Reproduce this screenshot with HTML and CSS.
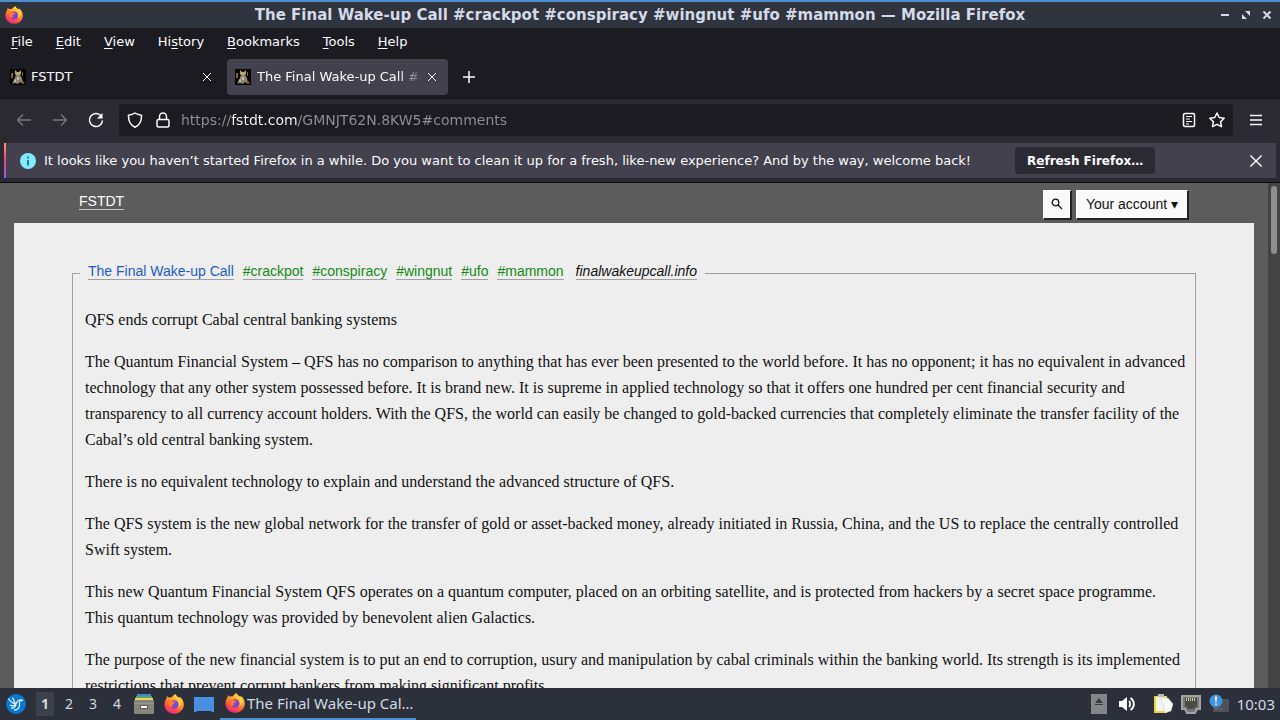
FILE: index.html
```html
<!DOCTYPE html>
<html lang="en">
  <head>
    <meta charset="UTF-8" />
    <meta name="viewport" content="width=device-width, initial-scale=1.0" />
    <title>The Final Wake-up Call #crackpot #conspiracy #wingnut #ufo #mammon</title>
    <link rel="stylesheet" href="styles.css">
  </head>
  <body>
    <!-- shared icons -->
    <svg class="defs" aria-hidden="true">
      <defs>
        <linearGradient id="flame" x1="0.8" y1="0" x2="0.3" y2="1">
          <stop offset="0" stop-color="#fff04a" />
          <stop offset="0.4" stop-color="#ffa02c" />
          <stop offset="0.75" stop-color="#ff4b42" />
          <stop offset="1" stop-color="#e8288c" />
        </linearGradient>
        <symbol id="firefox" viewBox="0 0 20 20">
          <path fill="url(#flame)" d="M11.500 0c.6 1.200 1.200 2 2 2.800.8.100 1.400.5 1.900 1.200l.2-1.300c2.600 1.700 4.200 4.500 4.200 7.800 0 5.200-4.200 9.200-9.500 9.200S.600 16 .500 10.800c0-2.500.700-4.800 2.100-6.600l.300-2.200 1.800 1.700c1-.4 2-.5 3-.3C8.500 2.100 10 1 11.500 0z" />
          <circle cx="10.200" cy="10.500" r="4.300" fill="#7b45d8" />
          <path fill="#ff7a2a" d="M3.500 6.200c2-.8 4.300-.2 5.300 1.200l2.600.7c-.2 1.200-1.200 1.500-2.400 1.700-.7 1-.7 1.900.2 2.700-2 1.300-4.600-.3-4.800-2.300z" />
          <path fill="#ffd13f" d="M12 2.500c.3 3 2.500 4 2.800 7 .2 1.700-.2 3-.9 4.400 4.600-2.500 4.400-7.400.8-9.900z" />
        </symbol>
        <symbol id="favicon" viewBox="0 0 16 16">
          <path fill="#050505" d="M0 0h16v16H0z" />
          <path fill="#b8a66e" d="M5 1l2 2h2l2-2v4L9 7H7L5 5z" />
          <path fill="#8c8472" d="M6 6h4l2 3 1 6-3-2-2 2-3-1-3 1 2-4z" />
          <path fill="#8d5b2e" d="M1 4h2v5H1zM12 3h1v4h-1zM12 11l3 3-2 1z" />
          <path fill="#c4bcaa" d="M7 8h2v3H7zM4 11l2-1v3H4z" />
        </symbol>
        <symbol id="cross" viewBox="0 0 10 10">
          <path fill="none" stroke="currentColor" d="M1 1l8 8M9 1L1 9" />
        </symbol>
      </defs>
    </svg>

    <header class="titlebar">
      <svg class="titlebar-icon"><use href="#firefox" /></svg>
      <h1>The Final Wake-up Call #crackpot #conspiracy #wingnut #ufo #mammon — Mozilla Firefox</h1>
      <div class="window-buttons">
        <button aria-label="Minimize"><svg viewBox="0 0 10 10"><path d="M1 4h8v2H1z" fill="currentColor" /></svg></button>
        <button aria-label="Restore"><svg viewBox="0 0 10 10"><path d="M4 1h5v5zM1 4v5h5z" fill="currentColor" /></svg></button>
        <button aria-label="Close"><svg viewBox="0 0 10 10"><path d="M1.500 1.500l7 7M8.500 1.500l-7 7" stroke="currentColor" stroke-width="2" /></svg></button>
      </div>
    </header>

    <nav class="menubar">
      <button><u>F</u>ile</button>
      <button><u>E</u>dit</button>
      <button><u>V</u>iew</button>
      <button>Hi<u>s</u>tory</button>
      <button><u>B</u>ookmarks</button>
      <button><u>T</u>ools</button>
      <button><u>H</u>elp</button>
    </nav>

    <div class="tabs">
      <div class="tab">
        <svg class="favicon"><use href="#favicon" /></svg>
        <button class="tab-title">FSTDT</button>
        <button class="tab-close" aria-label="Close tab"><svg><use href="#cross" /></svg></button>
      </div>
      <div class="tab active">
        <svg class="favicon"><use href="#favicon" /></svg>
        <button class="tab-title">The Final Wake-up Call #</button>
        <button class="tab-close" aria-label="Close tab"><svg><use href="#cross" /></svg></button>
      </div>
      <button class="new-tab" aria-label="New tab">
        <svg viewBox="0 0 14 14"><path d="M7 1v12M1 7h12" stroke="currentColor" stroke-width="1.500" /></svg>
      </button>
    </div>

    <div class="toolbar">
      <button class="tool dim" aria-label="Back">
        <svg viewBox="0 0 16 16"><path d="M15 8H1.500M7 2.500L1.500 8 7 13.500" /></svg>
      </button>
      <button class="tool dim" aria-label="Forward">
        <svg viewBox="0 0 16 16"><path d="M1 8h13.500M9 2.500L14.500 8 9 13.500" /></svg>
      </button>
      <button class="tool" aria-label="Reload">
        <svg viewBox="0 0 16 16"><path d="M13.500 4.500A6.500 6.500 0 1 0 14.500 8.500" /><path class="solid" d="M14.500 1v5.500H9z" /></svg>
      </button>
      <div class="urlbar">
        <svg viewBox="0 0 16 16"><path d="M8 1C6 2.500 3.800 3 1.500 3.200c-.3 5.800 1.500 9.600 6.500 12 5-2.400 6.800-6.200 6.500-12C12.200 3 10 2.500 8 1z" /></svg>
        <svg viewBox="0 0 16 16"><rect x="2" y="7.500" width="12" height="7.500" rx="1.500" /><path d="M4.500 7.500v-3a3.500 3.500 0 0 1 7 0v3" /></svg>
        <input class="url" type="text" aria-label="Address" value="https://fstdt.com/GMNJT62N.8KW5#comments" />
        <svg viewBox="0 0 16 16"><rect x="2.500" y="1.500" width="11" height="13" rx="1.500" /><path class="thin" d="M5 4.500h6M5 7h4M5 9.500h6M5 12h3" /></svg>
        <svg viewBox="0 0 16 16"><path d="M8 1l2.200 4.500 5 .7-3.600 3.500.9 5L8 12.300l-4.500 2.400.9-5L.800 6.200l5-.7z" /></svg>
      </div>
      <button class="tool" aria-label="Menu">
        <svg viewBox="0 0 16 16"><path d="M2 3.500h12M2 8h12M2 12.500h12" /></svg>
      </button>
    </div>

    <div class="notice">
      <div class="notice-box">
        <svg class="info" viewBox="0 0 16 16">
          <circle cx="8" cy="8" r="8" fill="#80ebff" />
          <path d="M7.200 3.500h1.600v2H7.200zM7.200 7h1.600v5.500H7.200z" fill="#235968" />
        </svg>
        <span>It looks like you haven’t started Firefox in a while. Do you want to clean it up for a fresh, like-new experience? And by the way, welcome back!</span>
        <button class="refresh">R<u>e</u>fresh Firefox…</button>
        <button class="notice-close" aria-label="Dismiss"><svg><use href="#cross" /></svg></button>
      </div>
    </div>

    <div class="viewport">
      <div class="site">
        <div class="site-nav">
          <a class="home" href="#">FSTDT</a>
          <div class="site-actions">
            <button aria-label="Search">
              <svg viewBox="0 0 12 12"><circle cx="4.500" cy="4.500" r="3.300" /><path d="M7 7l4 4" /></svg>
            </button>
            <button>Your account ▾</button>
          </div>
        </div>
        <main>
          <fieldset class="quote">
            <legend>
              <a class="title" href="#">The Final Wake-up Call</a>
              <a href="#">#crackpot</a>
              <a href="#">#conspiracy</a>
              <a href="#">#wingnut</a>
              <a href="#">#ufo</a>
              <a href="#">#mammon</a>
              <a class="source" href="#">finalwakeupcall.info</a>
            </legend>
            <p>QFS ends corrupt Cabal central banking systems</p>
            <p>The Quantum Financial System – QFS has no comparison to anything that has ever been presented to the world before. It has no opponent; it has no equivalent in advanced technology that any other system possessed before. It is brand new. It is supreme in applied technology so that it offers one hundred per cent financial security and transparency to all currency account holders. With the QFS, the world can easily be changed to gold-backed currencies that completely eliminate the transfer facility of the Cabal’s old central banking system.</p>
            <p>There is no equivalent technology to explain and understand the advanced structure of QFS.</p>
            <p>The QFS system is the new global network for the transfer of gold or asset-backed money, already initiated in Russia, China, and the US to replace the centrally controlled Swift system.</p>
            <p>This new Quantum Financial System QFS operates on a quantum computer, placed on an orbiting satellite, and is protected from hackers by a secret space programme. This quantum technology was provided by benevolent alien Galactics.</p>
            <p>The purpose of the new financial system is to put an end to corruption, usury and manipulation by cabal criminals within the banking world. Its strength is its implemented restrictions that prevent corrupt bankers from making significant profits.</p>
          </fieldset>
        </main>
      </div>
      <div class="scrollbar"><div class="thumb"></div></div>
    </div>

    <footer class="panel">
      <button class="launcher" aria-label="Applications">
        <svg viewBox="0 0 20 20">
          <circle cx="10" cy="10" r="10" fill="#0879d4" />
          <path d="M2.500 4.500c2 4 4.500 5 8 5.500M4 11c2 1.500 4 1 6-1 1-3 3-5 7-3.500-3-.3-4 1-3.500 3 .7 4-1.500 6.500-5.500 6.500M6.500 3.500L9 9M5 14c2 .2 4-.8 5-3" fill="none" stroke="#dff1ff" stroke-width="1.300" />
        </svg>
      </button>
      <div class="desktops">
        <button class="current">1</button>
        <button>2</button>
        <button>3</button>
        <button>4</button>
      </div>
      <div class="quick">
        <button aria-label="Files">
          <svg viewBox="0 0 20 20">
            <path d="M3 0h14v3H3z" fill="#3f87c9" /><path d="M2 2h16v3H2z" fill="#58a866" /><path d="M1 4h18v3H1z" fill="#f1d16a" />
            <rect y="6" width="20" height="14" rx="1" fill="#858580" /><path d="M0 9h20v1H0z" fill="#999994" />
            <rect x="6" y="11" width="8" height="4" rx="1" fill="#5d5d59" /><path d="M7 12h6v2H7z" fill="#fff" />
          </svg>
        </button>
        <button aria-label="Firefox"><svg><use href="#firefox" /></svg></button>
        <button aria-label="Show desktop">
          <svg viewBox="0 0 20 20"><path d="M0 3h20v15h-2l-1-1H3l-1 1H0z" fill="#4a90e2" /></svg>
        </button>
      </div>
      <button class="task">
        <svg><use href="#firefox" /></svg>
        <span>The Final Wake-up Cal…</span>
      </button>
      <div class="tray">
        <svg class="eject" viewBox="0 0 16 20"><path d="M0 0h16v20H0z" fill="#85868a" /><path d="M4 9h8L8 4zM4 10h8v1H4z" fill="#3c3d42" /></svg>
        <svg viewBox="0 0 18 20"><path d="M1 7h3l5-4v14l-5-4H1z" fill="#fff" /><path d="M11 7c1.500 1.500 1.500 4.500 0 6M12.500 4c4.500 3 4.500 9 0 12" fill="none" stroke="#fff" stroke-width="1.800" /></svg>
        <svg class="clipboard" viewBox="0 0 20 20"><path d="M1 2h13v17H1z" fill="#e9d63b" /><path d="M3 3h10v14H3z" fill="#f5f5ef" /><path d="M5 0h6v3H5z" fill="#b9bcb5" /><path d="M7 4h8l5 6-2 7-6 2-2-8z" fill="#f8f8f4" stroke="#c9c9c3" stroke-width="0.500" /></svg>
        <svg viewBox="0 0 20 20"><path d="M1 2h18v13h-3l-2 4H6l-2-4H1z" fill="#77787a" stroke="#a3a5a5" stroke-width="2" /><path d="M4 4h12v9h-2l-1 2H7l-1-2H4z" fill="#4a4b48" /><path d="M5.500 4v3M7.500 4v3M9.500 4v3M11.500 4v3M13.500 4v3" stroke="#d5c982" /></svg>
        <svg viewBox="0 0 20 20"><path d="M4 5h16v13H4z" fill="#4c5258" /><path d="M6 15h8" stroke="#697278" /><circle cx="7" cy="7" r="6.500" fill="#4295db" /><path d="M6 2.500h2l-.5 6h-1zM6.200 9.500h1.600v1.500H6.200z" fill="#fff" /></svg>
      </div>
      <time class="clock">10:03</time>
    </footer>
  </body>
</html>
```
FILE: styles.css
```css
* {
  box-sizing: border-box;
}
body {
  margin: 0;
  height: 100vh;
  display: flex;
  flex-direction: column;
  overflow: hidden;
  background: #1c1b22;
  color: #fbfbfe;
  font: 13px/18px "DejaVu Sans", sans-serif;
}
button {
  margin: 0;
  padding: 0;
  border: 0;
  background: none;
  color: inherit;
  font: inherit;
}
svg {
  display: block;
  flex: none;
}
.defs {
  position: absolute;
  width: 0;
  height: 0;
}
u {
  text-underline-offset: 2px;
}

/* window frame */
.titlebar {
  display: flex;
  align-items: center;
  height: 28px;
  padding: 0 8px 0 5px;
  border-top: 2px solid #4d8ed0;
  background: #30343f;
  color: #d3dae8;
}
.titlebar-icon {
  width: 18px;
  height: 18px;
}
.titlebar h1 {
  flex: 1;
  margin: 0;
  padding-left: 37px;
  font-size: 15px;
  text-align: center;
}
.window-buttons {
  display: flex;
  gap: 11px;
}
.window-buttons svg {
  width: 10px;
  height: 10px;
}
.menubar {
  display: flex;
  align-items: center;
  gap: 23px;
  height: 27px;
  padding: 0 11px;
}

/* tabs */
.tabs {
  display: flex;
  align-items: center;
  gap: 4px;
  height: 43px;
  padding: 0 2px;
}
.tab {
  display: flex;
  align-items: center;
  width: 221px;
  height: 36px;
  padding: 0 11px 0 8px;
  border-radius: 4px;
}
.tab.active {
  background: #42414d;
}
.favicon {
  width: 16px;
  height: 16px;
}
.tab-title {
  flex: 1;
  min-width: 0;
  margin: 0 4px 0 5px;
  overflow: hidden;
  white-space: nowrap;
  text-align: left;
}
.active .tab-title {
  margin-left: 6px;
  -webkit-mask-image: linear-gradient(to left, transparent, #000 24px);
  mask-image: linear-gradient(to left, transparent, #000 24px);
}
.tab-close svg {
  width: 10px;
  height: 10px;
}
.new-tab {
  padding: 0 10px;
}
.new-tab svg {
  width: 14px;
  height: 14px;
}

/* address bar */
.toolbar {
  display: flex;
  align-items: center;
  height: 42px;
  padding: 0 16px;
  background: #2b2a33;
  border-top: 1px solid #15141a;
}
.toolbar svg {
  width: 16px;
  height: 16px;
  fill: none;
  stroke: currentColor;
  stroke-width: 1.5;
  stroke-linejoin: round;
}
.toolbar .thin {
  stroke-width: 1;
}
.toolbar .solid {
  fill: currentColor;
  stroke: none;
}
.tool {
  margin-right: 20px;
}
.tool.dim {
  color: #77767e;
}
.tool:last-child {
  margin: 0;
}
.urlbar {
  flex: 1;
  display: flex;
  align-items: center;
  gap: 12px;
  height: 32px;
  margin-right: 15px;
  margin-left: -5px;
  padding: 0 8px;
  border-radius: 4px;
  background: #1c1b22;
}
/* the host name is lighter than the rest of the address */
.url {
  flex: 1;
  min-width: 0;
  margin-left: -2px;
  padding: 0;
  border: 0;
  outline: 0;
  background: linear-gradient(90deg, #8f8f97 50px, #fbfbfe 50px, #fbfbfe 116px, #8f8f97 116px);
  -webkit-background-clip: text;
  background-clip: text;
  color: transparent;
  font: inherit;
  font-size: 14px;
}

/* notification */
.notice {
  padding: 3px 4px 4px;
  border-bottom: 1px solid #0c0c0d;
  background: #2b2a33;
}
.notice-box {
  display: flex;
  align-items: center;
  height: 35px;
  padding: 0 13px 0 14px;
  border-left: 2px solid;
  border-image: linear-gradient(#ffa04d, #e2458f, #9059ff) 1;
  background: #42414d;
}
.info {
  width: 16px;
  height: 16px;
  margin-right: 8px;
}
.refresh {
  height: 27px;
  margin-left: 44px;
  padding: 0 12px;
  border-radius: 4px;
  background: #2b2a33;
  font-size: 12px;
  font-weight: bold;
}
.notice-close {
  margin-left: auto;
}
.notice-close svg {
  width: 14px;
  height: 14px;
}

/* page */
.viewport {
  flex: 1;
  display: flex;
  min-height: 0;
  overflow: hidden;
}
.site {
  flex: 1;
  padding: 0 14px;
  background: #5c5c5c;
  font: 14px/18px "Liberation Sans", sans-serif;
}
.site-nav {
  display: flex;
  justify-content: space-between;
  height: 40px;
  padding: 7px 65px 0;
}
.home {
  align-self: flex-start;
  margin-top: 3px;
  border-bottom: 1px solid #c8c8c8;
  color: #fff;
  line-height: 16px;
  text-decoration: none;
}
.site-actions {
  display: flex;
  gap: 4px;
}
.site-actions button {
  height: 30px;
  padding: 0 9px 2px;
  border: 1px solid #fff;
  border-right: 2px solid #222;
  border-bottom: 2px solid #222;
  background: #fafafa;
  color: #111;
}
.site-actions button:first-child {
  padding: 0 7px 2px;
}
.site-actions svg {
  width: 12px;
  height: 12px;
  fill: none;
  stroke: currentColor;
  stroke-width: 1.3;
}
main {
  padding: 39px 58px;
  background: #eee;
  color: #111;
}
.quote {
  margin: 0;
  padding: 0 8px 0 12px;
  border: 1px solid #a0a0a0;
  font: 16px/26px "Liberation Serif", serif;
}
.quote legend {
  display: flex;
  gap: 9px;
  margin-left: -5px;
  padding: 2px 8px 4px;
  font: 14px/15px "Liberation Sans", sans-serif;
}
.quote a {
  border-bottom: 1px solid #a0a0a0;
  color: #138a13;
  text-decoration: none;
}
.quote .title {
  color: #1f5cc0;
}
.quote .source {
  margin-left: 3px;
  color: #111;
  font-style: italic;
}
.quote p {
  margin: 0 0 16px;
}
.quote legend + p {
  margin-top: 23px;
}
.scrollbar {
  width: 12px;
  padding: 3px;
  background: #444;
}
.thumb {
  height: 68px;
  border-radius: 3px;
  background: #8f8f8f;
}

/* desktop panel */
.panel {
  display: flex;
  align-items: center;
  height: 32px;
  padding: 0 5px 0 6px;
  background: #2b303b;
  color: #d3dae3;
  font: 15px/20px "Noto Sans", sans-serif;
}
.panel svg {
  width: 20px;
  height: 20px;
}
.desktops {
  display: flex;
  gap: 6px;
  margin: 0 8px 0 10px;
}
.desktops button {
  width: 18px;
  height: 24px;
  font-size: 14px;
}
.desktops .current {
  background: #3b404c;
  font-weight: bold;
}
.quick {
  display: flex;
  gap: 10px;
}
.task {
  display: flex;
  align-items: center;
  gap: 2px;
  width: 196px;
  height: 32px;
  margin-left: 6px;
  padding: 0 4px 0 5px;
  border-bottom: 2px solid #4d8ed0;
  white-space: nowrap;
}
.tray {
  display: flex;
  align-items: center;
  gap: 8px;
  margin-left: auto;
}
.panel .eject {
  width: 16px;
  margin-right: 2px;
}
.panel .clipboard {
  margin-left: 8px;
}
.clock {
  margin-left: 8px;
}
```
